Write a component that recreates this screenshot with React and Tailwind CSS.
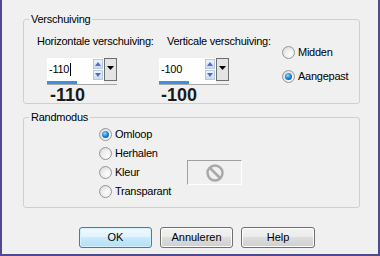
import React from "react";

const Radio = ({ checked }) => (
  <span className="w-[13px] h-[13px] rounded-full border border-[#979797] bg-[radial-gradient(circle_at_65%_65%,#ffffff_0%,#f0f0f0_40%,#d2d2d2_100%)] flex items-center justify-center shrink-0">
    {checked && (
      <span className="w-[7px] h-[7px] rounded-full bg-[radial-gradient(circle_at_40%_35%,#8fd8ff_0%,#1b82d2_50%,#0b3d78_100%)]" />
    )}
  </span>
);

const RadioRow = ({ checked, label }) => (
  <div className="flex items-center h-[13px]">
    <Radio checked={checked} />
    <span className="ml-[3px] leading-[13px]">{label}</span>
  </div>
);

const Spin = ({ value, caret, bar }) => (
  <div className="flex flex-col w-[70px]">
    <div className="flex h-[23px]">
      <div className="w-[57px] h-[23px] bg-white flex items-center pl-[2px]">
        <span className="leading-[13px]">{value}</span>
        {caret && <span className="w-px h-[13px] bg-black ml-px" />}
        <div className="ml-auto mr-[1px] flex flex-col gap-px">
          <div className="w-[10px] h-[10px] border border-[#b6c7de] bg-[linear-gradient(#eef3fb,#ccdaf0)] flex items-center justify-center">
            <svg width="6" height="4" viewBox="0 0 6 4"><path d="M0 4 L3 0 L6 4 Z" fill="#4d6fc0" /></svg>
          </div>
          <div className="w-[10px] h-[10px] border border-[#b6c7de] bg-[linear-gradient(#eef3fb,#ccdaf0)] flex items-center justify-center">
            <svg width="6" height="4" viewBox="0 0 6 4"><path d="M0 0 L6 0 L3 4 Z" fill="#4d6fc0" /></svg>
          </div>
        </div>
      </div>
      <div className="w-[13px] h-[23px] border border-[#6e6e6e] bg-[#e4e4e4] flex justify-center pt-[7px]">
        <svg width="7" height="4" viewBox="0 0 7 4"><path d="M0 0 L7 0 L3.5 4 Z" fill="#000" /></svg>
      </div>
    </div>
    <div className="h-[4px] w-[57px] bg-white border-b border-[#a8a8a8] flex">
      <div className="h-[3px] bg-[#3d8fe4]" style={{ width: bar }} />
    </div>
    <div className="w-[70px] h-px bg-[#a8a8a8] -mt-px" />
  </div>
);

export default function App() {
  return (
    <div
      className="w-[380px] h-[256px] bg-[#f0f0f0] border-l-2 border-r-2 border-b-2 border-[#4e4a8c] flex flex-col text-[11px] text-black tracking-[-0.25px] overflow-hidden"
      style={{ fontFamily: '"Liberation Sans", Arial, sans-serif' }}
    >
      <fieldset className="ml-[21px] mt-[13px] w-[337px] h-[91px] border border-[#cfcfcf] rounded-[3px] shrink-0">
        <legend className="ml-[5px] px-[2px] leading-[13px]">Verschuiving</legend>
        <div className="flex pl-[13px]">
          <div className="w-[122px] flex flex-col">
            <div className="mt-[9px] leading-[13px]">Horizontale verschuiving:</div>
            <div className="mt-[10px] ml-[10px]">
              <Spin value="-110" caret bar={30} />
              <div className="ml-[3px] text-[18px] font-bold leading-[20px] tracking-normal text-[#1a1a1a]">-110</div>
            </div>
          </div>
          <div className="w-[123px] flex flex-col">
            <div className="mt-[9px] ml-[8px] leading-[13px]">Verticale verschuiving:</div>
            <div className="mt-[10px]">
              <Spin value="-100" bar={30} />
              <div className="ml-[2px] text-[18px] font-bold leading-[20px] tracking-normal text-[#1a1a1a]">-100</div>
            </div>
          </div>
          <div className="flex flex-col mt-[20px] gap-[11px]">
            <RadioRow label="Midden" />
            <RadioRow checked label="Aangepast" />
          </div>
        </div>
      </fieldset>

      <fieldset className="ml-[21px] mt-[7px] w-[337px] h-[97px] border border-[#cfcfcf] rounded-[3px] shrink-0">
        <legend className="ml-[5px] px-[2px] leading-[13px]">Randmodus</legend>
        <div className="flex pl-[75px]">
          <div className="w-[88px] flex flex-col gap-[6px] mt-[4px]">
            <RadioRow checked label="Omloop" />
            <RadioRow label="Herhalen" />
            <RadioRow label="Kleur" />
            <RadioRow label="Transparant" />
          </div>
          <div className="mt-[36px] w-[55px] h-[25px] border-t border-l border-[#a0a0a0] border-r border-b border-r-white border-b-white flex items-center justify-center">
            <svg width="20" height="20" viewBox="0 0 20 20">
              <circle cx="10" cy="10" r="7.5" fill="none" stroke="#a9a9a9" strokeWidth="2.5" />
              <line x1="5" y1="5" x2="15" y2="15" stroke="#a9a9a9" strokeWidth="2.5" />
            </svg>
          </div>
        </div>
      </fieldset>

      <div className="flex ml-[77px] mt-[19px] tracking-normal">
        <div className="w-[73px] h-[21px] rounded-[3px] border border-[#3c7fb1] bg-[linear-gradient(#f0f9fe,#e0f3fd_50%,#c8eafd_50%,#b4def6)] flex items-center justify-center shadow-[inset_0_0_0_1px_#d4f0fd]">
          OK
        </div>
        <div className="ml-[8px] w-[73px] h-[21px] rounded-[3px] border border-[#707070] bg-[linear-gradient(#f2f2f2,#ebebeb_50%,#dddddd_50%,#cfcfcf)] flex items-center justify-center shadow-[inset_0_0_0_1px_#fbfbfb]">
          Annuleren
        </div>
        <div className="ml-[8px] w-[74px] h-[21px] rounded-[3px] border border-[#707070] bg-[linear-gradient(#f2f2f2,#ebebeb_50%,#dddddd_50%,#cfcfcf)] flex items-center justify-center shadow-[inset_0_0_0_1px_#fbfbfb]">
          Help
        </div>
      </div>
    </div>
  );
}
